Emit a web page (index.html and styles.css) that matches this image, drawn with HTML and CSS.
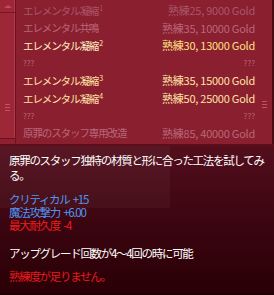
FILE: index.html
```html
<!DOCTYPE html>
<html lang="ja">
<head>
<meta charset="utf-8">
<link rel="stylesheet" href="styles.css">
</head>
<body>
<div class="window">
  <div class="list-panel">
    <div class="scrollbar">
      <div class="sb-btn sb-up"><span class="tri-up"></span></div>
      <div class="sb-track"><div class="grip"><i></i><i></i><i></i></div></div>
      <div class="sb-btn sb-down"></div>
    </div>
    <ul class="list">
      <li class="row faded"><span class="name">エレメンタル凝縮<sup>1</sup></span><span class="cost">熟練25, 9000 Gold</span></li>
      <li class="row dim"><span class="name">エレメンタル共鳴</span><span class="cost">熟練35, 10000 Gold</span></li>
      <li class="row hi"><span class="name">エレメンタル凝縮<sup>2</sup></span><span class="cost">熟練30, 13000 Gold</span></li>
      <li class="row dim small"><span class="name">???</span><span class="cost">???</span></li>
      <li class="row on"><span class="name">エレメンタル凝縮<sup>3</sup></span><span class="cost">熟練35, 15000 Gold</span></li>
      <li class="row on"><span class="name">エレメンタル凝縮<sup>4</sup></span><span class="cost">熟練50, 25000 Gold</span></li>
      <li class="row dim small"><span class="name">???</span><span class="cost">???</span></li>
      <li class="row dim"><span class="name">原罪のスタッフ専用改造</span><span class="cost">熟練85, 40000 Gold</span></li>
    </ul>
    <div class="edge"><div class="grip"><i></i><i></i><i></i></div></div>
  </div>
  <div class="tooltip">
    <p class="line desc">原罪のスタッフ独特の材質と形に合った工法を試してみ<br>る。</p>
    <div class="stats">
      <p class="line blue">クリティカル +15</p>
      <p class="line blue">魔法攻撃力 +6.00</p>
      <p class="line red">最大耐久度 -4</p>
    </div>
    <p class="line note">アップグレード回数が4～4回の時に可能</p>
    <p class="line warn">熟練度が足りません。</p>
  </div>
</div>
</body>
</html>
```
FILE: styles.css
```css
* { box-sizing: border-box; }
html, body { margin: 0; padding: 0; background: #2b0006; }
body { width: 274px; height: 295px; overflow: hidden; font-family: "Noto Sans CJK JP", "Noto Sans", sans-serif; }

.window { display: flex; flex-direction: column; width: 274px; height: 295px; }

.list-panel {
  display: flex;
  height: 146px;
  background: #8a1f2f;
  border-bottom: 2px solid #5e0d1a;
}

.scrollbar {
  display: flex;
  flex-direction: column;
  width: 16px;
  background: #9d2737;
  border-right: 1px solid #6c1222;
  box-shadow: inset -1px 0 0 #b03848;
}
.sb-btn { height: 13px; display: flex; align-items: center; justify-content: center; }
.sb-up { border-bottom: 1px solid #7a1626; }
.sb-down { height: 6px; border-top: 1px solid #6a1020; background: #8e2030; }
.tri-up {
  width: 0; height: 0;
  border-left: 4px solid transparent;
  border-right: 4px solid transparent;
  border-bottom: 3px solid #c24a5a;
}
.sb-track { flex: 1; display: flex; align-items: center; justify-content: center; padding-top: 64px; }
.grip { display: flex; flex-direction: column; gap: 2px; }
.grip i { display: block; width: 5px; height: 1px; background: #c8505f; }

.list {
  flex: 1;
  list-style: none;
  margin: 0;
  padding: 2px 0 0 7px;
}
.row {
  display: flex;
  justify-content: space-between;
  align-items: center;
  height: 17.5px;
  white-space: nowrap;
}
.name { font-size: 10.5px; letter-spacing: -1.1px; line-height: 1; }
.cost { font-size: 11px; letter-spacing: -0.25px; line-height: 1; }
sup { font-size: 7px; letter-spacing: 0; vertical-align: 4px; margin-left: 1px; }

.row.dim { color: #b9677a; }
.row.faded { color: #a9566a; }
.row.on { color: #ffe4a6; }
.row.hi { color: #fff0c2; }
.row.hi .cost { color: #ffe084; }
.row.small .name, .row.small .cost { font-size: 8px; letter-spacing: 0; }

.edge {
  width: 19px;
  display: flex;
  align-items: center;
  justify-content: flex-end;
  padding: 64px 5px 0 0;
  border-right: 2px solid #4a0a14;
}

.tooltip {
  flex: 1;
  padding: 7px 0 0 9px;
  color: #ffffff;
  font-size: 11.5px;
  letter-spacing: -1.3px;
  word-spacing: 2px;
  background:
    linear-gradient(rgba(255,255,255,0.035), rgba(255,255,255,0.035)) no-repeat 0 0 / 170px 62px,
    linear-gradient(#530e1c, #3a0510 55%, #2a0006);
  border-bottom: 2px solid #1c0004;
}
.line { margin: 0; white-space: nowrap; line-height: 13px; }
.desc { line-height: 15px; }
.stats { margin-top: 10px; }
.blue { color: #4f97f2; }
.red { color: #f01c1c; }
.note { margin-top: 15px; }
.warn { margin-top: 10px; color: #e81a1a; }
```
